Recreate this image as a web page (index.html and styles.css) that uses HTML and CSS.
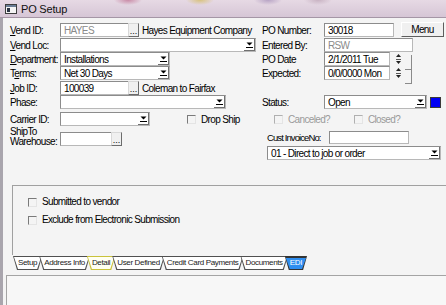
FILE: index.html
```html
<!DOCTYPE html>
<html lang="en">
<head>
    <meta charset="UTF-8">
    <meta name="viewport" content="width=device-width, initial-scale=1.0">
    <title>PO Setup</title>
    <link rel="stylesheet" href="styles.css">
</head>
<body>
<div class="window">
    <div class="titlebar">
        <svg class="app-icon" width="12" height="10" viewBox="0 0 12 10">
            <rect x="0.5" y="0.5" width="11" height="9" fill="#f4f4f4" stroke="#3e3e3e"/>
            <rect x="1" y="1" width="10" height="2" fill="#6a7d96"/>
            <rect x="2" y="4" width="3" height="4" fill="#2c3646"/>
        </svg>
        <span class="title">PO Setup</span>
    </div>

    <div class="client">
        <div class="form">
            <!-- left column -->
            <div class="col col-left">
                <div class="row">
                    <span class="lbl"><u>V</u>end ID:</span>
                    <span class="field disabled w-id">HAYES</span>
                    <span class="dots">...</span>
                    <span class="desc">Hayes Equipment Company</span>
                </div>
                <div class="row mt1">
                    <span class="lbl"><u>V</u>end Loc:</span>
                    <span class="field combo w-loc"><span class="val"></span><span class="arrow"><svg width="7" height="6" viewBox="0 0 7 6"><polygon points="0.5,0.5 6.5,0.5 3.5,3.5" fill="#000"/><rect x="0" y="5" width="7" height="1" fill="#000"/></svg></span></span>
                </div>
                <div class="row">
                    <span class="lbl"><u>D</u>epartment:</span>
                    <span class="field combo w-dept"><span class="val">Installations</span><span class="arrow"><svg width="7" height="6" viewBox="0 0 7 6"><polygon points="0.5,0.5 6.5,0.5 3.5,3.5" fill="#000"/><rect x="0" y="5" width="7" height="1" fill="#000"/></svg></span></span>
                </div>
                <div class="row">
                    <span class="lbl">T<u>e</u>rms:</span>
                    <span class="field combo w-dept"><span class="val">Net 30 Days</span><span class="arrow"><svg width="7" height="6" viewBox="0 0 7 6"><polygon points="0.5,0.5 6.5,0.5 3.5,3.5" fill="#000"/><rect x="0" y="5" width="7" height="1" fill="#000"/></svg></span></span>
                </div>
                <div class="row mt1">
                    <span class="lbl"><u>J</u>ob ID:</span>
                    <span class="field w-id">100039</span>
                    <span class="dots">...</span>
                    <span class="desc">Coleman to Fairfax</span>
                </div>
                <div class="row">
                    <span class="lbl">Phase:</span>
                    <span class="field combo w-phase"><span class="val"></span><span class="arrow"><svg width="7" height="6" viewBox="0 0 7 6"><polygon points="0.5,0.5 6.5,0.5 3.5,3.5" fill="#000"/><rect x="0" y="5" width="7" height="1" fill="#000"/></svg></span></span>
                </div>
                <div class="row mt3">
                    <span class="lbl">Carrier ID:</span>
                    <span class="field combo w-carrier"><span class="val"></span><span class="arrow"><svg width="7" height="6" viewBox="0 0 7 6"><polygon points="0.5,0.5 6.5,0.5 3.5,3.5" fill="#000"/><rect x="0" y="5" width="7" height="1" fill="#000"/></svg></span></span>
                    <span class="check drop-ship"><span class="box"></span>Drop Ship</span>
                </div>
                <div class="row row-tall mt1">
                    <span class="lbl lbl-two">ShipTo<br>Warehouse:</span>
                    <span class="field w-wh"></span>
                    <span class="dots">...</span>
                </div>
            </div>

            <!-- right column -->
            <div class="col col-right">
                <div class="row">
                    <span class="lbl">PO Number:</span>
                    <span class="field w-po">30018</span>
                    <span class="btn">Menu</span>
                </div>
                <div class="row mt1">
                    <span class="lbl">Entered By:</span>
                    <span class="field disabled w-by">RSW</span>
                </div>
                <div class="row">
                    <span class="lbl">PO Date</span>
                    <span class="field w-date">2/1/2011 Tue</span>
                    <span class="spin"><svg width="7" height="12" viewBox="0 0 7 12"><polygon points="3.5,1 6,4 1,4" fill="#222"/><rect x="1" y="6" width="5" height="1" fill="#555"/><polygon points="1,8 6,8 3.5,11" fill="#222"/></svg></span>
                    <span class="bracket"></span>
                </div>
                <div class="row">
                    <span class="lbl">Expected:</span>
                    <span class="field w-date">0/0/0000 Mon</span>
                    <span class="spin"><svg width="7" height="12" viewBox="0 0 7 12"><polygon points="3.5,1 6,4 1,4" fill="#222"/><rect x="1" y="6" width="5" height="1" fill="#555"/><polygon points="1,8 6,8 3.5,11" fill="#222"/></svg></span>
                    <span class="bracket"></span>
                </div>
                <div class="row mt15">
                    <span class="lbl">Status:</span>
                    <span class="field combo w-status"><span class="val">Open</span><span class="arrow"><svg width="7" height="6" viewBox="0 0 7 6"><polygon points="0.5,0.5 6.5,0.5 3.5,3.5" fill="#000"/><rect x="0" y="5" width="7" height="1" fill="#000"/></svg></span></span>
                    <span class="swatch"></span>
                </div>
                <div class="row mt3">
                    <span class="check off canceled"><span class="box"></span>Canceled?</span>
                    <span class="check off closed"><span class="box"></span>Closed?</span>
                </div>
                <div class="row row-inv mt4">
                    <span class="lbl lbl-inv">Cust InvoiceNo:</span>
                    <span class="field w-inv"></span>
                </div>
                <div class="row row-inv mt2">
                    <span class="field combo w-method"><span class="val">01 - Direct to job or order</span><span class="arrow"><svg width="7" height="6" viewBox="0 0 7 6"><polygon points="0.5,0.5 6.5,0.5 3.5,3.5" fill="#000"/><rect x="0" y="5" width="7" height="1" fill="#000"/></svg></span></span>
                </div>
            </div>
        </div>

        <div class="group">
            <div class="check"><span class="box"></span>Submitted to vendor</div>
            <div class="check"><span class="box"></span>Exclude from Electronic Submission</div>
        </div>

        <div class="tabs">
            <span class="tab">Setup</span>
            <span class="tab">Address Info</span>
            <span class="tab tab-detail">Detail</span>
            <span class="tab">User Defined</span>
            <span class="tab">Credit Card Payments</span>
            <span class="tab">Documents</span>
            <span class="tab tab-active">EDI</span>
        </div>

        <div class="panel"></div>
    </div>
</div>
</body>
</html>
```

FILE: styles.css
```css
body {
    margin: 0;
    background-color: #f4f4f4;
    font-family: "Liberation Sans", Arial, sans-serif;
    font-size: 10px;
    letter-spacing: -0.65px;
    color: #000;
}
.window {
    width: 446px;
    height: 305px;
    overflow: hidden;
    display: flex;
    flex-direction: column;
}

/* title bar */
.titlebar {
    height: 17px;
    flex: none;
    display: flex;
    align-items: center;
    gap: 4px;
    padding-left: 5px;
    border-bottom: 1px solid #a596a6;
    background:
        radial-gradient(ellipse 14px 5px at 128px 0px, #c98aa6, transparent),
        radial-gradient(ellipse 14px 5px at 200px 0px, #d8c27e, transparent),
        radial-gradient(ellipse 14px 5px at 268px 0px, #b7a3c4, transparent),
        radial-gradient(ellipse 14px 5px at 318px 0px, #c8b2c2, transparent),
        linear-gradient(#e6d9e4, #d6c6d6);
}
.title {
    font-size: 11px;
    letter-spacing: -0.2px;
    color: #111;
}

/* client area */
.client {
    flex: 1;
    display: flex;
    flex-direction: column;
    border-left: 3px solid #a9a5ad;
}
.form {
    box-sizing: border-box;
    display: flex;
    padding: 5px 0 0 7px;
    height: 167px;
    flex: none;
}
.col-left {
    width: 252px;
}
.col-right {
    flex: 1;
}
.row {
    display: flex;
    align-items: center;
    height: 14px;
}
.mt1 { margin-top: 1px; }
.mt2 { margin-top: 2px; }
.mt3 { margin-top: 3px; }
.mt4 { margin-top: 4px; }
.mt15 { margin-top: 15px; }

.lbl {
    flex: none;
    width: 50px;
    white-space: nowrap;
}
.col-right .lbl {
    width: 62px;
}
.lbl-two {
    line-height: 10px;
}
.row-tall {
    height: 20px;
    align-items: flex-end;
}
.row-tall .field, .row-tall .dots {
    margin-bottom: 1px;
}

/* inputs */
.field {
    box-sizing: border-box;
    height: 14px;
    flex: none;
    display: flex;
    align-items: center;
    padding-left: 3px;
    background-color: #fff;
    border: 1px solid;
    border-color: #8c8c8c #b8b8b8 #b8b8b8 #8c8c8c;
    white-space: nowrap;
    overflow: hidden;
}
.disabled {
    color: #8a8a8a;
}
.combo .val {
    flex: 1;
}
.arrow {
    box-sizing: border-box;
    width: 11px;
    height: 12px;
    display: flex;
    align-items: center;
    justify-content: center;
    border-right: 1px solid #707070;
    border-bottom: 1px solid #707070;
}
.dots {
    box-sizing: border-box;
    width: 11px;
    height: 14px;
    flex: none;
    margin-left: -1px;
    background-color: #f0f0f0;
    border: 1px solid;
    border-color: #d8d8d8 #6c6c6c #6c6c6c #d8d8d8;
    font-size: 9px;
    letter-spacing: 0;
    line-height: 14px;
    text-align: center;
}
.desc {
    margin-left: 3px;
    white-space: nowrap;
}

.w-id { width: 69px; }
.w-loc { width: 196px; }
.w-dept { width: 110px; }
.w-phase { width: 166px; }
.w-carrier { width: 90px; }
.w-wh { width: 52px; }
.w-po { width: 70px; }
.w-by { width: 89px; }
.w-date { width: 66px; }
.w-status { width: 103px; }
.w-inv { width: 80px; height: 13px; }
.w-method { width: 174px; }

.btn {
    box-sizing: border-box;
    width: 43px;
    height: 15px;
    margin-left: 7px;
    margin-top: -1px;
    border: 1px solid;
    border-color: #fff #5e5e5e #5e5e5e #fff;
    background-color: #f0f0f0;
    text-align: center;
    line-height: 13px;
}
.spin {
    margin-left: 5px;
    display: flex;
}
.bracket {
    box-sizing: border-box;
    align-self: flex-start;
    width: 7px;
    height: 15px;
    margin: 3px 0 0 3px;
    border-right: 1px solid #8a8a8a;
    border-bottom: 1px solid #8a8a8a;
}
.swatch {
    width: 9px;
    height: 9px;
    margin-left: 3px;
    background-color: #0000f4;
    border: 1px solid #3a3a3a;
}

/* checkboxes */
.check {
    display: flex;
    align-items: center;
    white-space: nowrap;
}
.check .box {
    box-sizing: border-box;
    width: 9px;
    height: 9px;
    margin-right: 5px;
    border-top: 1px solid #7a7a7a;
    border-left: 1px solid #7a7a7a;
    border-right: 1px solid #e4e4e4;
    border-bottom: 1px solid #e4e4e4;
}
.off {
    color: #9a9a9a;
}
.off .box {
    border-top-color: #b0b0b0;
    border-left-color: #b0b0b0;
}
.drop-ship {
    margin-left: 37px;
}
.canceled {
    margin-left: 12px;
}
.closed {
    margin-left: 24px;
}
.row-inv {
    padding-left: 5px;
}
.col-right .lbl-inv {
    width: 62px;
    font-size: 9.5px;
    letter-spacing: -0.9px;
}

/* group box */
.group {
    margin: 0 0 0 9px;
    height: 59px;
    border-top: 1px solid #a0a0a0;
    border-left: 1px solid #a0a0a0;
    padding: 10px 0 0 15px;
    display: flex;
    flex-direction: column;
    gap: 6px;
    line-height: 12px;
}

/* tabs */
.tabs {
    display: flex;
    padding-left: 10px;
    margin-top: 1px;
    height: 14px;
}
.tab {
    position: relative;
    z-index: 0;
    padding: 0 5px;
    margin-right: -3px;
    height: 14px;
    line-height: 14px;
    font-size: 8px;
    letter-spacing: -0.35px;
    color: #1a1a1a;
    white-space: nowrap;
}
.tab::before, .tab::after {
    content: "";
    position: absolute;
    z-index: -1;
    clip-path: polygon(0 0, 100% 0, calc(100% - 4px) 100%, 4px 100%);
}
.tab::before {
    inset: 0;
    background-color: #505050;
}
.tab::after {
    inset: 1px 1px 1px 1px;
    background-color: #fff;
}
.tab-detail::before {
    background-color: #c9c23a;
}
.tab-detail::after {
    background-color: #fffff2;
}
.tab-active {
    color: #fff;
}
.tab-active::before {
    background-color: #333;
}
.tab-active::after {
    top: 2px;
    background-color: #2f8ef0;
}

.panel {
    flex: 1;
    margin: 5px 0 0 3px;
    border-top: 1px solid #a4a4a4;
    border-left: 1px solid #a4a4a4;
    background-color: #f7f7f7;
}
```
